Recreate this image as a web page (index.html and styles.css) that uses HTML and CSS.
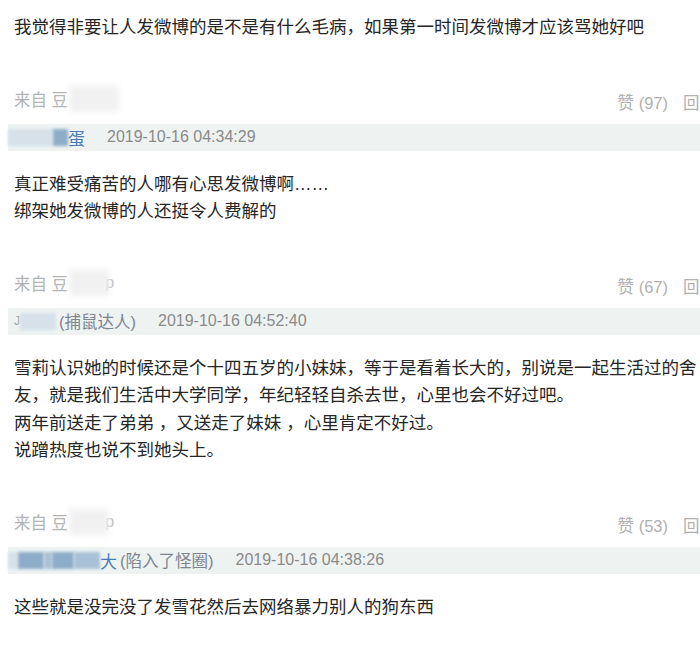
FILE: index.html
```html
<!DOCTYPE html>
<html lang="zh-CN">
<head>
<meta charset="utf-8">
<title>评论</title>
<link rel="stylesheet" href="styles.css">
</head>
<body>
<div class="list">
  <p class="text">我觉得非要让人发微博的是不是有什么毛病，如果第一时间发微博才应该骂她好吧</p>

  <div class="meta">
    <span class="from">来自 豆<span class="smudge w50"></span></span>
    <span class="acts">赞 (97)<span class="reply">回复</span></span>
  </div>
  <div class="bar">
    <span class="blur b-light w45"></span><span class="blur b-blue w15"></span><span class="name">蛋</span>
    <span class="time">2019-10-16 04:34:29</span>
  </div>
  <p class="text">真正难受痛苦的人哪有心思发微博啊……<br>绑架她发微博的人还挺令人费解的</p>

  <div class="meta">
    <span class="from">来自 豆<span class="smudge w40"></span><span class="tail">p</span></span>
    <span class="acts">赞 (67)<span class="reply">回复</span></span>
  </div>
  <div class="bar">
    <span class="lead">J</span><span class="blur b-light w36"></span><span class="tag">(捕鼠达人)</span>
    <span class="time">2019-10-16 04:52:40</span>
  </div>
  <p class="text">雪莉认识她的时候还是个十四五岁的小妹妹，等于是看着长大的，别说是一起生活过的舍友，就是我们生活中大学同学，年纪轻轻自杀去世，心里也会不好过吧。<br>两年前送走了弟弟 ，又送走了妹妹 ，心里肯定不好过。<br>说蹭热度也说不到她头上。</p>

  <div class="meta">
    <span class="from">来自 豆<span class="smudge w40"></span><span class="tail">p</span></span>
    <span class="acts">赞 (53)<span class="reply">回复</span></span>
  </div>
  <div class="bar">
    <span class="blur b-light w10"></span><span class="blur b-blue w26"></span><span class="blur b-mid w8"></span><span class="blur b-blue w22"></span><span class="blur b-mid w26"></span><span class="name">大</span> <span class="tag">(陷入了怪圈)</span>
    <span class="time">2019-10-16 04:38:26</span>
  </div>
  <p class="text">这些就是没完没了发雪花然后去网络暴力别人的狗东西</p>
</div>
</body>
</html>
```
FILE: styles.css
```css
html, body {
  margin: 0;
  padding: 0;
  background: #ffffff;
  overflow: hidden;
}
body {
  font-family: "Liberation Sans", "Noto Sans CJK SC", sans-serif;
  color: #333333;
}
.list {
  padding: 14px 0 0 8px;
}
.text {
  margin: 0;
  padding-left: 6px;
  font-size: 17.5px;
  line-height: 27.5px;
  color: #262626;
  word-break: break-all;
}
.bar + .text {
  margin-top: 20px;
}
.meta {
  display: flex;
  align-items: center;
  margin-top: 45px;
  margin-right: -16px;
  padding-left: 6px;
  height: 24px;
  font-size: 16.5px;
  color: #b3b3b3;
}
.from {
  display: flex;
  align-items: center;
}
.smudge {
  display: inline-block;
  height: 26px;
  background: #f1f1f1;
  filter: blur(3px);
  margin-left: 1px;
}
.tail {
  margin-left: -4px;
  color: #bbbbbb;
}
.acts {
  margin-left: auto;
  padding-top: 6px;
  color: #b0b0b0;
  white-space: nowrap;
}
.reply {
  margin-left: 15px;
}
.bar {
  display: flex;
  align-items: center;
  margin-top: 13px;
  height: 27px;
  background: #eef3f2;
  font-size: 16px;
  color: #888888;
  white-space: nowrap;
}
.blur {
  display: inline-block;
  height: 17px;
  filter: blur(1.5px);
}
.b-light { background: #d6e1ea; }
.b-mid { background: #a9c1d6; }
.b-blue { background: #8eadc9; }
.w8 { width: 8px; }
.w10 { width: 10px; }
.w15 { width: 15px; }
.w22 { width: 22px; }
.w26 { width: 26px; }
.w36 { width: 36px; }
.w40 { width: 40px; }
.w45 { width: 45px; }
.w50 { width: 50px; }
.name {
  color: #4a7bb5;
  font-size: 17px;
}
.lead {
  margin-left: 6px;
  color: #9aa;
  font-size: 12px;
}
.tag {
  color: #7d8590;
  margin-left: 3px;
  font-size: 16.5px;
}
.time {
  margin-left: 22px;
  color: #8a8a8a;
}
```
